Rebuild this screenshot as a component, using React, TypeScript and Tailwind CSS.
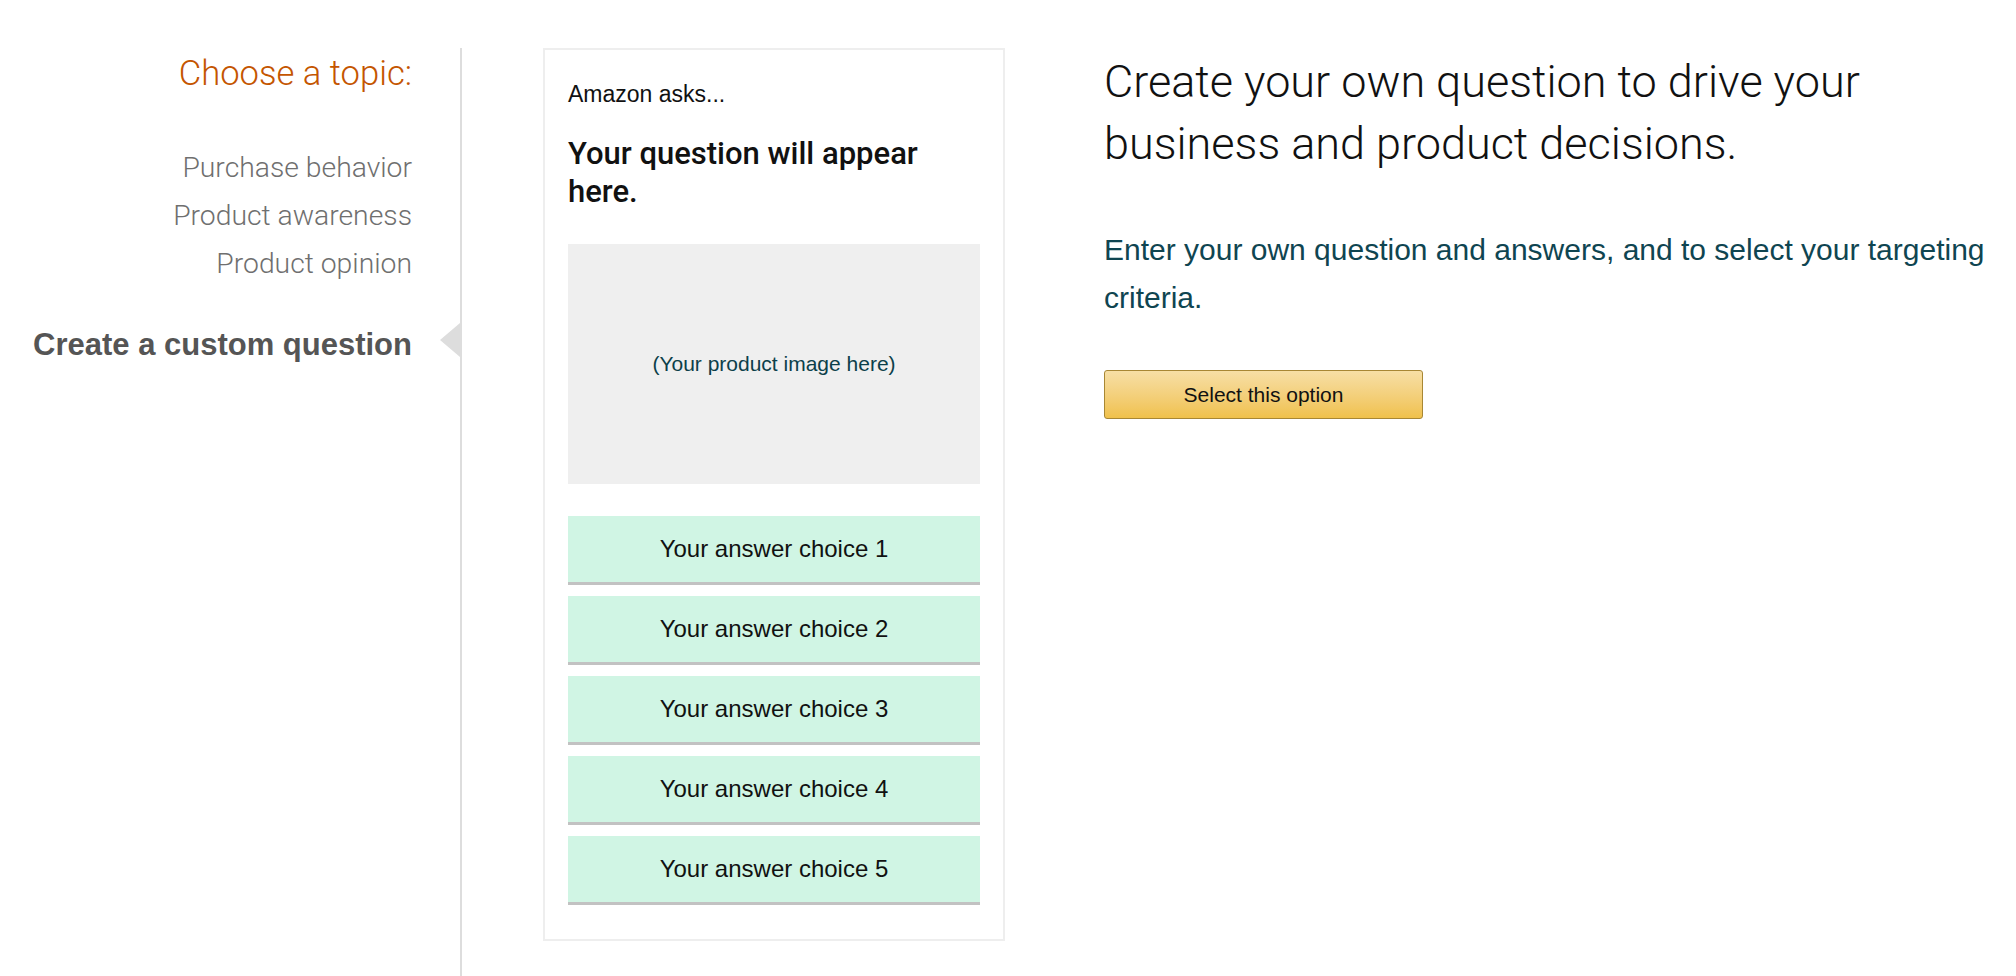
import React from "react";

const topics = ["Purchase behavior", "Product awareness", "Product opinion"];
const answers = [1, 2, 3, 4, 5];

const App: React.FC = () => {
  return (
    <div className="min-h-[976px] bg-white flex pt-12 font-['Liberation_Sans',Arial,sans-serif]">
      {/* topic nav */}
      <aside className="w-[462px] shrink-0 min-h-[928px] border-r-2 border-[#dddddd] pr-12 text-right">
        <h2 className="mt-[5px] text-[34.6px] leading-[40px] font-light text-[#c45500] font-['Roboto',sans-serif]">
          Choose a topic:
        </h2>
        <ul className="mt-[51px] font-['Roboto',sans-serif] font-light">
          {topics.map((t) => (
            <li key={t} className="text-[28.3px] leading-[48px] text-[#6f6f6f]">
              {t}
            </li>
          ))}
        </ul>
        <div className="relative mt-[37px] text-[31px] leading-[40px] font-bold text-[#555555]">
          Create a custom question
          <span className="absolute right-[-48px] top-[-2px] w-0 h-0 border-y-[17px] border-y-transparent border-r-[20px] border-r-[#dddddd]" />
        </div>
      </aside>

      {/* preview card */}
      <section className="ml-[81px] w-[462px] shrink-0 self-start border-2 border-[#eeeeee] px-[23px] pt-[30px] pb-[34px]">
        <p className="text-[23px] leading-[28px] text-[#111111]">Amazon asks...</p>
        <h3 className="mt-[27px] text-[31px] leading-[38px] font-medium text-[#111111] font-['Roboto',sans-serif]">
          Your question will appear here.
        </h3>
        <div className="mt-[33px] h-[240px] bg-[#efefef] flex items-center justify-center">
          <span className="text-[21px] leading-[24px] text-[#0c3f4a]">(Your product image here)</span>
        </div>
        <div className="mt-8 flex flex-col gap-[11px]">
          {answers.map((n) => (
            <div
              key={n}
              className="h-[69px] bg-[#d0f5e4] border-b-[3px] border-[#c2c2c2] flex items-center justify-center text-[24px] leading-[28px] text-[#111111]"
            >
              Your answer choice {n}
            </div>
          ))}
        </div>
      </section>

      {/* description */}
      <main className="ml-[99px] flex-1 pr-3">
        <h1 className="mt-[3px] text-[45px] leading-[62px] font-light text-[#111111] font-['Roboto',sans-serif]">
          Create your own question to drive your business and product decisions.
        </h1>
        <p className="mt-[51px] text-[30px] leading-[48px] text-[#0f4551]">
          Enter your own question and answers, and to select your targeting criteria.
        </p>
        <button className="mt-[48px] w-[319px] h-[49px] rounded-[3px] border border-[#a88734] bg-gradient-to-b from-[#f7dfa5] to-[#f0c14b] text-[21px] text-[#111111]">
          Select this option
        </button>
      </main>
    </div>
  );
};

export default App;
